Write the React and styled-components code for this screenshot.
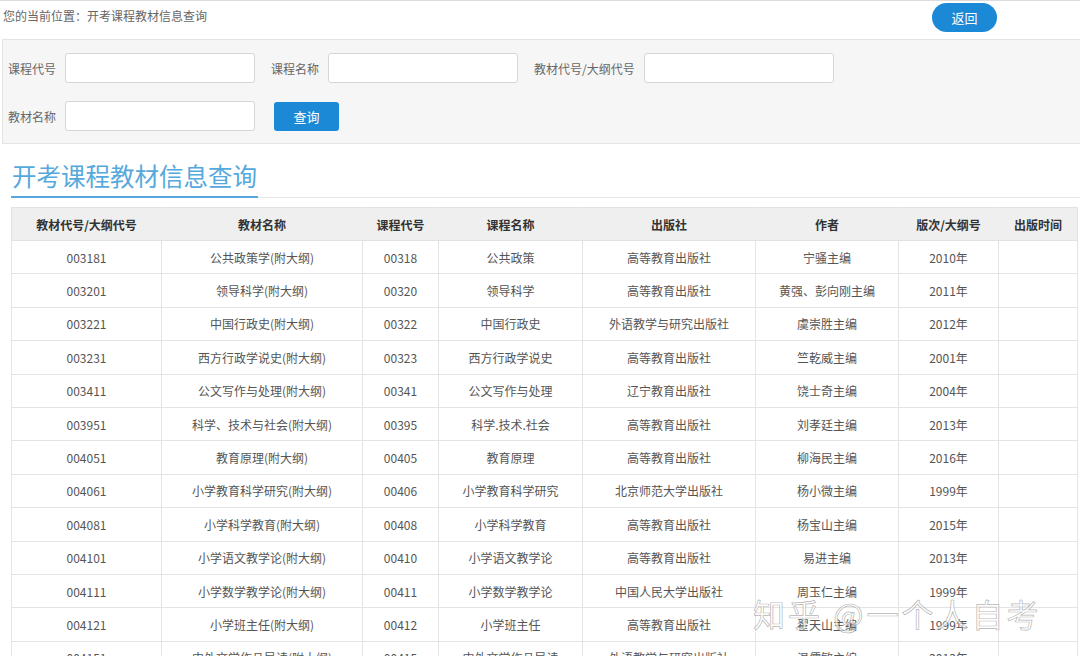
import styled, { createGlobalStyle } from 'styled-components';

const GlobalStyle = createGlobalStyle`
  html, body {
    margin: 0;
    padding: 0;
    background: #fff;
    overflow: hidden;
  }
  body {
    font-family: "Noto Sans CJK SC", "Noto Sans", sans-serif;
    font-size: 12px;
    color: #555;
  }
`;

const Page = styled.div`
  position: relative;
  width: 1080px;
  height: 656px;
  overflow: hidden;
`;

const TopBar = styled.div`
  display: flex;
  align-items: flex-start;
  height: 38px;
  border-top: 1px solid #dcdcdc;
  padding-left: 3px;
`;

const Crumb = styled.span`
  margin-top: 6px;
  line-height: 18px;
  color: #666;
  font-size: 12px;
`;

const BackButton = styled.button`
  margin: 2px 83px 0 auto;
  width: 65px;
  height: 29px;
  border: none;
  border-radius: 15px;
  background: #1c89d6;
  color: #fff;
  font-family: inherit;
  font-size: 13px;
  cursor: pointer;
`;

const SearchPanel = styled.div`
  margin-left: 2px;
  background: #f6f6f6;
  border: 1px solid #e4e4e4;
  border-right: none;
  padding: 13px 5px 12px;
  display: flex;
  flex-direction: column;
  gap: 18px;
`;

const FieldRow = styled.div`
  display: flex;
  align-items: center;
  gap: 16px;
`;

const Field = styled.label`
  display: flex;
  align-items: center;
  gap: 9px;
  color: #666;
  font-size: 12px;
`;

const Input = styled.input`
  box-sizing: border-box;
  width: 190px;
  height: 30px;
  border: 1px solid #d6d6d6;
  border-radius: 3px;
  background: #fff;
  outline: none;
`;

const QueryButton = styled.button`
  margin-left: 3px;
  width: 65px;
  height: 29px;
  border: none;
  border-radius: 3px;
  background: #1c89d6;
  color: #fff;
  font-family: inherit;
  font-size: 13px;
`;

const TitleBar = styled.div`
  margin: 15px 0 9px 11px;
  border-bottom: 1px solid #e6e6e6;
  display: flex;
`;

const Title = styled.h2`
  margin: 0 0 -1px;
  padding: 0 1px 3px;
  font-size: 24.5px;
  font-weight: normal;
  line-height: 34px;
  color: #56a9dc;
  border-bottom: 2px solid #56a9dc;
`;

const Table = styled.table`
  margin-left: 11px;
  width: 1066px;
  border-collapse: collapse;
  table-layout: fixed;
`;

const Th = styled.th`
  height: 32px;
  padding: 0;
  background: #efefef;
  border: 1px solid #e2e2e2;
  border-left-color: #efefef;
  border-right-color: #efefef;
  color: #333;
  font-weight: bold;
  font-size: 12px;
  text-align: center;
  &:first-child { border-left-color: #e2e2e2; }
  &:last-child { border-right-color: #e2e2e2; }
`;

const Td = styled.td`
  height: 32.4px;
  padding: 0;
  border: 1px solid #e4e4e4;
  color: #555;
  font-size: 12px;
  text-align: center;
  white-space: nowrap;
`;

const Watermark = styled.div`
  position: absolute;
  left: 753px;
  top: 590px;
  font-size: 32px;
  letter-spacing: 3px;
  color: rgba(255, 255, 255, 0.65);
  -webkit-text-stroke: 0.7px rgba(140, 140, 140, 0.65);
  pointer-events: none;
  white-space: nowrap;
`;

const columns = [
  ['教材代号/大纲代号', 150],
  ['教材名称', 201],
  ['课程代号', 76],
  ['课程名称', 144],
  ['出版社', 173],
  ['作者', 143],
  ['版次/大纲号', 100],
  ['出版时间', 79],
];

const rows = [
  ['003181', '公共政策学(附大纲)', '00318', '公共政策', '高等教育出版社', '宁骚主编', '2010年'],
  ['003201', '领导科学(附大纲)', '00320', '领导科学', '高等教育出版社', '黄强、彭向刚主编', '2011年'],
  ['003221', '中国行政史(附大纲)', '00322', '中国行政史', '外语教学与研究出版社', '虞崇胜主编', '2012年'],
  ['003231', '西方行政学说史(附大纲)', '00323', '西方行政学说史', '高等教育出版社', '竺乾威主编', '2001年'],
  ['003411', '公文写作与处理(附大纲)', '00341', '公文写作与处理', '辽宁教育出版社', '饶士奇主编', '2004年'],
  ['003951', '科学、技术与社会(附大纲)', '00395', '科学.技术.社会', '高等教育出版社', '刘孝廷主编', '2013年'],
  ['004051', '教育原理(附大纲)', '00405', '教育原理', '高等教育出版社', '柳海民主编', '2016年'],
  ['004061', '小学教育科学研究(附大纲)', '00406', '小学教育科学研究', '北京师范大学出版社', '杨小微主编', '1999年'],
  ['004081', '小学科学教育(附大纲)', '00408', '小学科学教育', '高等教育出版社', '杨宝山主编', '2015年'],
  ['004101', '小学语文教学论(附大纲)', '00410', '小学语文教学论', '高等教育出版社', '易进主编', '2013年'],
  ['004111', '小学数学教学论(附大纲)', '00411', '小学数学教学论', '中国人民大学出版社', '周玉仁主编', '1999年'],
  ['004121', '小学班主任(附大纲)', '00412', '小学班主任', '高等教育出版社', '翟天山主编', '1999年'],
  ['004151', '中外文学作品导读(附大纲)', '00415', '中外文学作品导读', '外语教学与研究出版社', '温儒敏主编', '2013年'],
];

const App = () => {
  return (
    <Page>
      <GlobalStyle />
      <TopBar>
        <Crumb>您的当前位置：开考课程教材信息查询</Crumb>
        <BackButton>返回</BackButton>
      </TopBar>

      {/* 查询条件 */}
      <SearchPanel>
        <FieldRow>
          <Field>课程代号<Input /></Field>
          <Field>课程名称<Input /></Field>
          <Field>教材代号/大纲代号<Input /></Field>
        </FieldRow>
        <FieldRow>
          <Field>教材名称<Input /></Field>
          <QueryButton>查询</QueryButton>
        </FieldRow>
      </SearchPanel>

      <TitleBar>
        <Title>开考课程教材信息查询</Title>
      </TitleBar>

      <Table>
        <colgroup>
          {columns.map(([name, w]) => (
            <col key={name} style={{ width: w }} />
          ))}
        </colgroup>
        <thead>
          <tr>
            {columns.map(([name]) => (
              <Th key={name}>{name}</Th>
            ))}
          </tr>
        </thead>
        <tbody>
          {rows.map((r) => (
            <tr key={r[0]}>
              {r.map((c, i) => (
                <Td key={i}>{c}</Td>
              ))}
              <Td />
            </tr>
          ))}
        </tbody>
      </Table>

      <Watermark>知乎 @一个人自考</Watermark>
    </Page>
  );
};

export default App;
